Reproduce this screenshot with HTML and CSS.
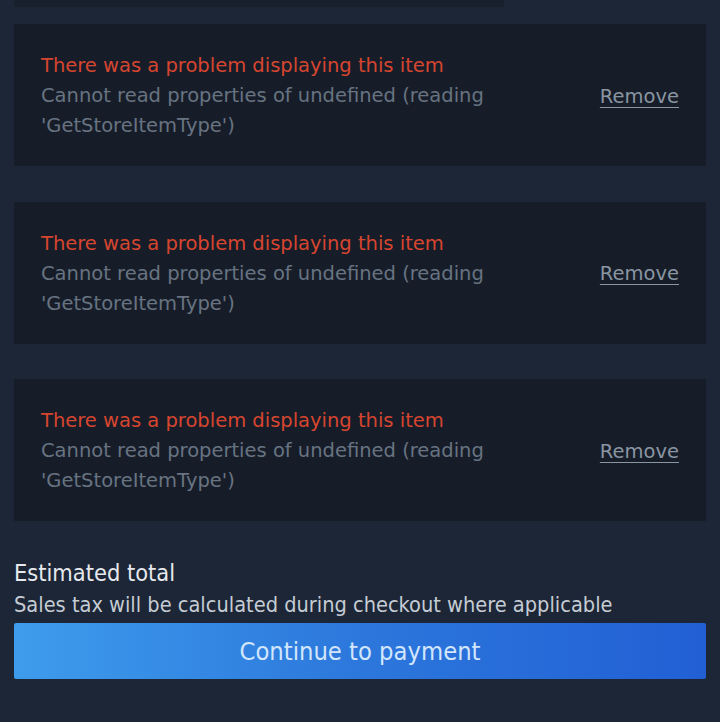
FILE: index.html
```html
<!DOCTYPE html>
<html lang="en">
<head>
    <meta charset="UTF-8">
    <meta name="viewport" content="width=device-width, initial-scale=1.0">
    <title>Cart</title>
    <link rel="stylesheet" href="styles.css">
</head>
<body>
    <div class="cart">
        <div class="cart-stub"></div>

        <div class="cart-item">
            <div class="item-error">
                <div class="error-title">There was a problem displaying this item</div>
                <div class="error-detail">Cannot read properties of undefined (reading 'GetStoreItemType')</div>
            </div>
            <a class="remove-link" href="#">Remove</a>
        </div>

        <div class="cart-item">
            <div class="item-error">
                <div class="error-title">There was a problem displaying this item</div>
                <div class="error-detail">Cannot read properties of undefined (reading 'GetStoreItemType')</div>
            </div>
            <a class="remove-link" href="#">Remove</a>
        </div>

        <div class="cart-item">
            <div class="item-error">
                <div class="error-title">There was a problem displaying this item</div>
                <div class="error-detail">Cannot read properties of undefined (reading 'GetStoreItemType')</div>
            </div>
            <a class="remove-link" href="#">Remove</a>
        </div>

        <div class="cart-summary">
            <div class="summary-title">Estimated total</div>
            <div class="summary-note">Sales tax will be calculated during checkout where applicable</div>
            <button class="pay-button">Continue to payment</button>
        </div>
    </div>
</body>
</html>
```

FILE: styles.css
```css
body {
    margin: 0;
    background-color: #1c2636;
    font-family: "DejaVu Sans", sans-serif;
}

.cart {
    display: flex;
    flex-direction: column;
    padding: 0 14px;
}

.cart-stub {
    width: 490px;
    height: 7px;
    background-color: #18202d;
    margin-bottom: 17px;
}

.cart-item {
    display: flex;
    align-items: center;
    justify-content: space-between;
    background-color: #161d29;
    padding: 27px 27px 25px;
    margin-bottom: 35.5px;
}

.item-error {
    width: 480px;
    font-size: 19.5px;
    line-height: 30px;
}

.error-title {
    color: #d6452f;
}

.error-detail {
    color: #687381;
}

.remove-link {
    color: #8a95a2;
    font-size: 19.5px;
    text-decoration: underline;
    text-underline-offset: 4px;
}

.cart-summary {
    display: flex;
    flex-direction: column;
}

.summary-title {
    color: #e6e9ed;
    font-family: "DejaVu Sans Condensed", "DejaVu Sans", sans-serif;
    font-size: 23.4px;
    line-height: 32px;
}

.summary-note {
    color: #c5ccd4;
    font-family: "DejaVu Sans Condensed", "DejaVu Sans", sans-serif;
    font-size: 21.6px;
    line-height: 32px;
}

.pay-button {
    height: 56px;
    margin-top: 2px;
    padding-top: 2px;
    border: none;
    border-radius: 2px;
    background: linear-gradient(90deg, #3e9cec, #2c77dc 50%, #225fd5);
    color: #d2e6fb;
    font-family: "DejaVu Sans Condensed", "DejaVu Sans", sans-serif;
    font-size: 25.3px;
}
```
